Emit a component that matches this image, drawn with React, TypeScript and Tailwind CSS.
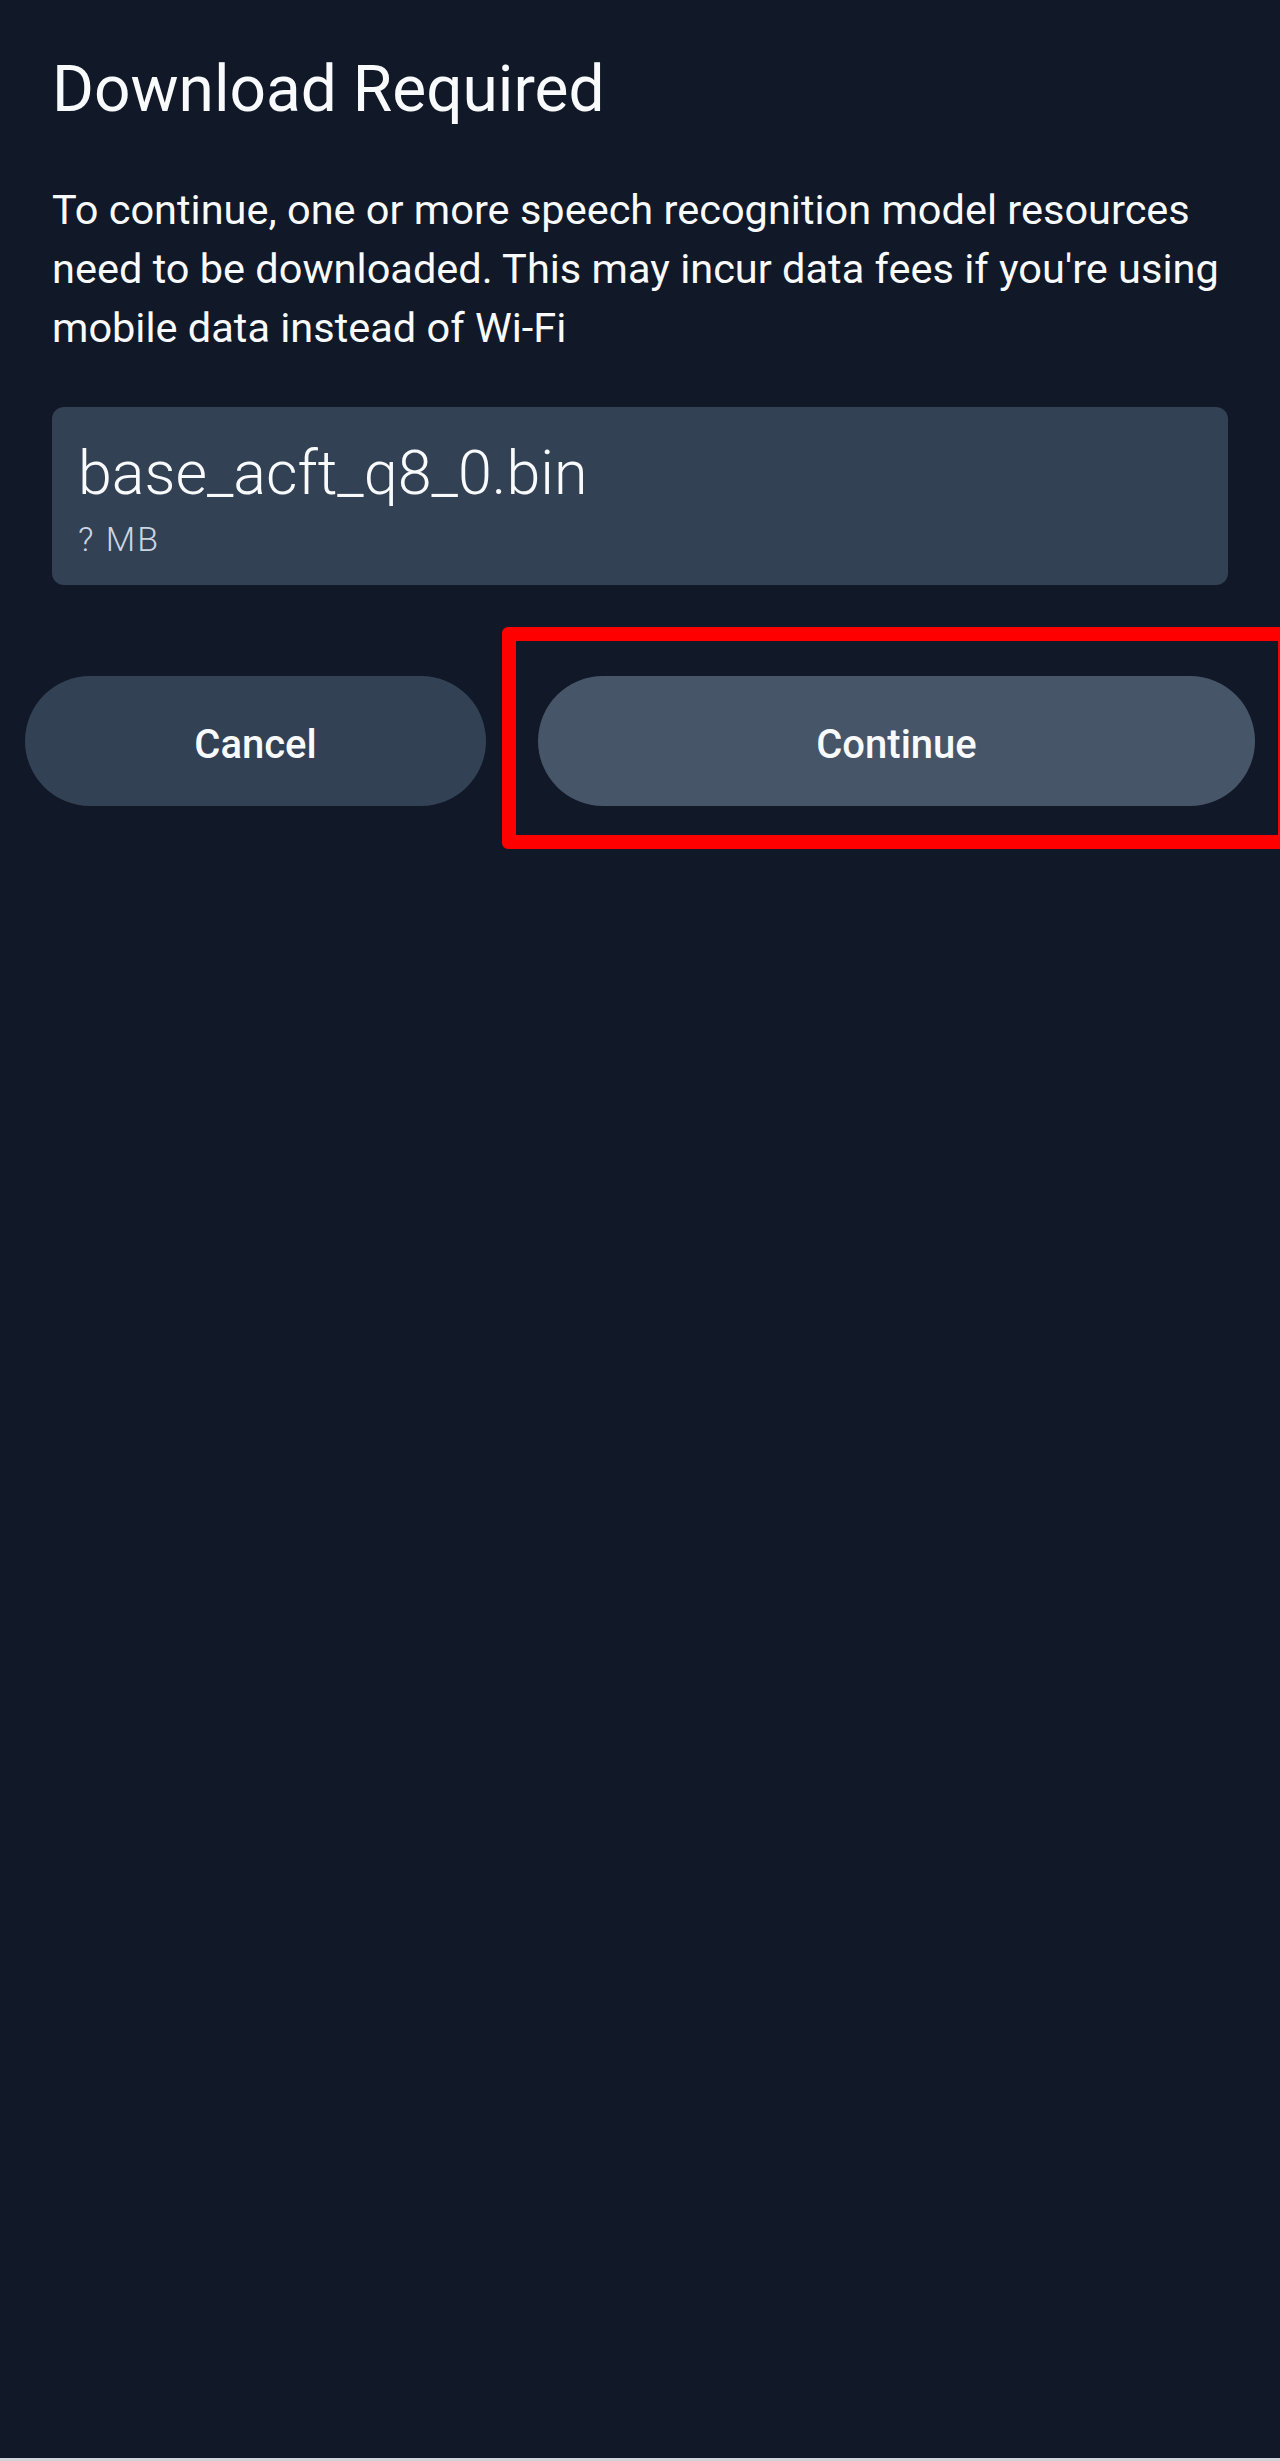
export default function App() {
  return (
    <div className="relative flex min-h-[2461px] flex-col bg-[#111827] font-['Roboto',sans-serif] text-[#f8fafc]">
      <div className="flex-1">
        <div className="px-[52px] pt-[51px]">
          <h1 className="text-[64px] leading-[77px] font-normal">Download Required</h1>
          <p className="mt-[52px] text-[41.5px] leading-[59px]">
            To continue, one or more speech recognition model resources need to be downloaded. This may incur data fees if you're using mobile data instead of Wi-Fi
          </p>
          <div className="mt-[50px] h-[178px] rounded-[12px] bg-[#334155] px-[26px] pt-[30px]">
            <div className="text-[61px] leading-[72px] font-light">base_acft_q8_0.bin</div>
            <div className="mt-[9px] text-[34px] leading-[42px] tracking-[2px] font-light text-[#cbd5e1]">? MB</div>
          </div>
        </div>

        <div className="relative mt-[91px] flex gap-[52px] px-[25px]">
          <button className="h-[130px] w-[461px] rounded-full bg-[#334155] pt-[7px] text-[40px] font-medium">Cancel</button>
          <button className="h-[130px] flex-1 rounded-full bg-[#475569] pt-[7px] text-[40px] font-medium">Continue</button>
          <div className="pointer-events-none absolute left-[502px] top-[-49px] h-[222px] w-[790px] rounded-[6px] border-[14px] border-[#ff0000]" />
        </div>
      </div>
      <div className="h-[3px] bg-[#d1d5db]" />
    </div>
  );
}
